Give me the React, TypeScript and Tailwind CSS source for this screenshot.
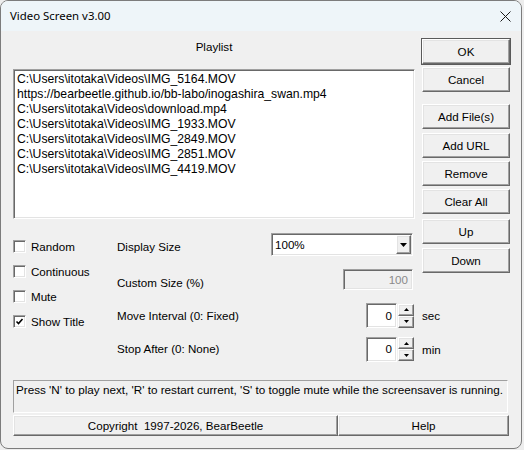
import React from 'react';

const raised =
  'border border-t-white border-l-white border-r-[#696969] border-b-[#696969] shadow-[inset_-1px_-1px_0_#a0a0a0,inset_1px_1px_0_#e3e3e3] bg-[#f0f0f0]';
const sunken =
  'border border-t-[#a0a0a0] border-l-[#a0a0a0] border-r-white border-b-white shadow-[inset_1px_1px_0_#696969,inset_-1px_-1px_0_#e3e3e3]';

const playlist = [
  'C:\\Users\\itotaka\\Videos\\IMG_5164.MOV',
  'https://bearbeetle.github.io/bb-labo/inogashira_swan.mp4',
  'C:\\Users\\itotaka\\Videos\\download.mp4',
  'C:\\Users\\itotaka\\Videos\\IMG_1933.MOV',
  'C:\\Users\\itotaka\\Videos\\IMG_2849.MOV',
  'C:\\Users\\itotaka\\Videos\\IMG_2851.MOV',
  'C:\\Users\\itotaka\\Videos\\IMG_4419.MOV',
];

function Btn({ children, className = '' }: { children: React.ReactNode; className?: string }) {
  return (
    <button type="button" className={`${raised} flex items-center justify-center text-black ${className}`}>
      {children}
    </button>
  );
}

function Check({ label, checked = false }: { label: string; checked?: boolean }) {
  return (
    <div className="flex items-center h-[25px]">
      <div className={`${sunken} w-[13px] h-[13px] bg-white flex items-center justify-center shrink-0`}>
        {checked && (
          <svg width="9" height="9" viewBox="0 0 9 9">
            <path d="M1.5 4.5 L3.5 6.5 L7.5 2" stroke="#000" strokeWidth="1.6" fill="none" />
          </svg>
        )}
      </div>
      <span className="ml-[5px] pt-[1px]">{label}</span>
    </div>
  );
}

function Spinner({ value }: { value: string }) {
  return (
    <div className="flex items-center shrink-0">
      <div className={`${sunken} w-[31px] h-[25px] bg-white flex items-center justify-end pr-[4px]`}>{value}</div>
      <div className="flex flex-col ml-[1px]">
        <div className={`${raised} w-[16px] h-[12px] flex items-center justify-center`}>
          <svg width="5" height="3" viewBox="0 0 5 3">
            <path d="M0 3 L2.5 0 L5 3 Z" fill="#000" />
          </svg>
        </div>
        <div className={`${raised} w-[16px] h-[12px] flex items-center justify-center`}>
          <svg width="5" height="3" viewBox="0 0 5 3">
            <path d="M0 0 L5 0 L2.5 3 Z" fill="#000" />
          </svg>
        </div>
      </div>
    </div>
  );
}

export default function App() {
  return (
    <div className="w-[524px] h-[450px] bg-[#ededed] font-['Liberation_Sans',Arial,sans-serif] text-[11.6px] text-black">
      <div className="w-[522px] h-[449px] border border-[#7c7c7c] rounded-[8px] overflow-hidden flex flex-col bg-[#f0f0f0]">
        <div className="h-[30px] bg-[#eef5f9] flex items-center justify-between pl-[9px] pr-[10px]">
          <span className="font-['Noto_Sans',sans-serif] text-[11.4px]">Video Screen v3.00</span>
          <svg width="11" height="11" viewBox="0 0 11 11">
            <path d="M0.5 0.5 L10.5 10.5 M10.5 0.5 L0.5 10.5" stroke="#1a1a1a" strokeWidth="1" />
          </svg>
        </div>

        <div className="flex-1 pl-[12px] pt-[8px]">
          <div className="flex items-start">
            <div className="w-[402px] shrink-0 flex flex-col">
              <div className="h-[16px] flex items-center justify-center">Playlist</div>
              <div className={`${sunken} mt-[14px] h-[150px] bg-white px-[3px] pt-[2px] leading-[15px] text-[12.2px] overflow-hidden`}>
                {playlist.map((p) => (
                  <div key={p} className="whitespace-nowrap">{p}</div>
                ))}
              </div>

              <div className="flex mt-[14px]">
                <div className="w-[104px] shrink-0 pt-[1px]">
                  <Check label="Random" />
                  <Check label="Continuous" />
                  <Check label="Mute" />
                  <Check label="Show Title" checked />
                </div>
                <div className="flex flex-col shrink-0">
                  <div className="flex items-center h-[23px]">
                    <span className="w-[154px] pt-[4px] shrink-0">Display Size</span>
                    <div className={`${sunken} w-[142px] h-[23px] bg-white flex items-center pl-[3px] pr-[1px] shrink-0`}>
                      <span className="flex-1">100%</span>
                      <div className={`${raised} w-[15px] h-[19px] flex items-center justify-center`}>
                        <svg width="7" height="4" viewBox="0 0 7 4">
                          <path d="M0 0 L7 0 L3.5 4 Z" fill="#000" />
                        </svg>
                      </div>
                    </div>
                  </div>
                  <div className="flex items-center h-[21px] mt-[13px]">
                    <span className="w-[226px] pt-[7px] shrink-0">Custom Size (%)</span>
                    <div className={`${sunken} w-[70px] h-[21px] bg-[#f0f0f0] flex items-center justify-end pr-[4px] text-[#8a8a8a] shrink-0`}>
                      100
                    </div>
                  </div>
                  <div className="flex items-center h-[25px] mt-[13px] w-[340px]">
                    <span className="w-[249px] shrink-0">Move Interval (0: Fixed)</span>
                    <Spinner value="0" />
                    <span className="ml-[8px]">sec</span>
                  </div>
                  <div className="flex items-center h-[24px] mt-[9px] w-[340px]">
                    <span className="w-[249px] shrink-0">Stop After (0: None)</span>
                    <Spinner value="0" />
                    <span className="ml-[8px] pt-[2px]">min</span>
                  </div>
                </div>
              </div>
            </div>

            <div className="ml-[7px] w-[88px] shrink-0 flex flex-col">
              <Btn className="h-[25px] outline outline-1 outline-[#5a5a5a]">OK</Btn>
              <Btn className="h-[25px] mt-[3px]">Cancel</Btn>
              <Btn className="h-[25px] mt-[12px]">Add File(s)</Btn>
              <Btn className="h-[25px] mt-[4px]">Add URL</Btn>
              <Btn className="h-[25px] mt-[3px]">Remove</Btn>
              <Btn className="h-[25px] mt-[3px]">Clear All</Btn>
              <Btn className="h-[25px] mt-[5px]">Up</Btn>
              <Btn className="h-[25px] mt-[4px]">Down</Btn>
            </div>
          </div>

          <div className="mt-[19px] w-[495px] h-[33px] border border-t-[#a0a0a0] border-l-[#a0a0a0] border-r-white border-b-white pl-[2px] whitespace-nowrap text-[11.7px]">
            Press 'N' to play next, 'R' to restart current, 'S' to toggle mute while the screensaver is running.
          </div>
          <div className="flex mt-[2px]">
            <Btn className="w-[325px] h-[21px]">Copyright&nbsp; 1997-2026, BearBeetle</Btn>
            <Btn className="w-[171px] h-[21px]">Help</Btn>
          </div>
        </div>
      </div>
    </div>
  );
}
